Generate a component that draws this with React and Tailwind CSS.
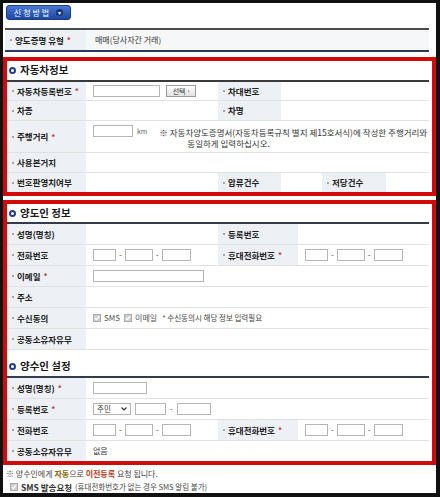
import React from "react";

// small gray dot in front of every label
const Dot = () => <span className="mr-[3px] inline-block h-[2px] w-[2px] shrink-0 bg-[#a5a5a5]" />;

function Label({ children, req }) {
  return (
    <div className="flex items-center bg-[#edf1f6] pl-[5px] text-[8.5px] font-bold leading-none text-[#222] whitespace-nowrap">
      <Dot />
      <span>{children}</span>
      {req && <span className="ml-[3px] text-[8px] text-[#c23a2b]">*</span>}
    </div>
  );
}

function Cell({ children, className = "" }) {
  return (
    <div className={`flex items-center pl-[7px] text-[8px] leading-none text-[#333] whitespace-nowrap ${className}`}>
      {children}
    </div>
  );
}

function Input({ className = "" }) {
  return <span className={`inline-block h-[12px] shrink-0 border border-[#b5b5b5] bg-white ${className}`} />;
}

function Phone() {
  return (
    <div className="flex items-center gap-[3px] text-[8px] text-[#444]">
      <Input className="w-[23px]" />
      <span>-</span>
      <Input className="w-[28px]" />
      <span>-</span>
      <Input className="w-[29px]" />
    </div>
  );
}

function Check() {
  return (
    <svg width="8" height="8" viewBox="0 0 8 8" className="shrink-0">
      <rect x="0.5" y="0.5" width="7" height="7" fill="#cfcfcf" stroke="#ababab" />
      <path d="M1.8 4.1 L3.3 5.6 L6.2 2.3" fill="none" stroke="#fff" strokeWidth="1.3" />
    </svg>
  );
}

function Title({ children, className = "" }) {
  return (
    <div className={`flex items-center pl-[2px] ${className}`}>
      <span className="h-[7px] w-[7px] rounded-full border-2 border-[#1f3f8f]" />
      <span className="ml-[4px] text-[10.5px] font-bold leading-none text-[#1a1a1a]">{children}</span>
    </div>
  );
}

const row = "grid border-b border-[#e1e1e1]";

export default function App() {
  return (
    <div className="h-[497px] w-[440px] overflow-hidden border-t-[3px] border-l-[3px] border-r-[4px] border-b-[4px] border-[#111] bg-white font-['Noto_Sans_CJK_KR','Noto_Sans',sans-serif]">
      {/* 신청방법 button */}
      <div className="ml-[3px] mt-[2px] flex h-[15px] w-[65px] items-center justify-center gap-[5px] rounded-[3px] border border-[#1b3b85] bg-gradient-to-b from-[#4a78d4] to-[#1d47a2] text-[8px] leading-none text-white">
        <span className="tracking-[2px]">신청방법</span>
        <span className="flex h-[7px] w-[7px] items-center justify-center rounded-full bg-[#17357a] text-[6px]">▾</span>
      </div>

      {/* 양도증명 유형 */}
      <div className="ml-[2px] mt-[8px] grid h-[24px] w-[424px] grid-cols-[81px_1fr] border-t-2 border-b-2 border-t-[#4a4a4a] border-b-[#2c3a5a]">
        <Label req>양도증명 유형</Label>
        <Cell className="bg-[#f6f7f8] pl-[9px]">매매(당사자간 거래)</Cell>
      </div>

      {/* 자동차정보 */}
      <div className="mt-[5px] border-4 border-[#d10b0b]">
        <Title className="h-[19px]">자동차정보</Title>
        <div className="mr-[3px] border-t-2 border-[#3a3a3a]">
          <div className={`${row} h-[19px] grid-cols-[79px_132px_63px_1fr]`}>
            <Label req>자동차등록번호</Label>
            <Cell>
              <Input className="w-[67px]" />
              <span className="ml-[6px] flex h-[12px] w-[30px] items-center justify-center gap-[2px] border border-[#9a9a9a] bg-gradient-to-b from-white to-[#e2e2e2] text-[7px] text-[#333]">
                선택<span className="text-[6px]">›</span>
              </span>
            </Cell>
            <Label>차대번호</Label>
            <Cell />
          </div>
          <div className={`${row} h-[20px] grid-cols-[79px_132px_63px_1fr]`}>
            <Label>차종</Label>
            <Cell />
            <Label>차명</Label>
            <Cell />
          </div>
          <div className={`${row} h-[32px] grid-cols-[79px_1fr]`}>
            <Label req>주행거리</Label>
            <Cell className="items-start pt-[4px]">
              <Input className="w-[40px]" />
              <span className="ml-[4px] mt-[3px] text-[7px] text-[#666]">km</span>
              <div className="ml-[12px] mt-[2px] text-[8.5px] leading-[11px] text-[#333]">
                <div>※ 자동차양도증명서(자동차등록규칙 별지 제15호서식)에 작성한 주행거리와</div>
                <div className="ml-[28px]">동일하게 입력하십시오.</div>
              </div>
            </Cell>
          </div>
          <div className={`${row} h-[20px] grid-cols-[79px_1fr]`}>
            <Label>사용본거지</Label>
            <Cell />
          </div>
          <div className="grid h-[19px] grid-cols-[79px_132px_63px_41px_64px_1fr]">
            <Label>번호판영치여부</Label>
            <Cell />
            <Label>압류건수</Label>
            <Cell />
            <Label>저당건수</Label>
            <Cell />
          </div>
        </div>
      </div>

      {/* 양도인 정보 / 양수인 설정 */}
      <div className="mt-[4px] border-4 border-[#d10b0b]">
        <Title className="h-[18px]">양도인 정보</Title>
        <div className="mr-[3px] border-t-2 border-[#333a4a]">
          <div className={`${row} h-[21px] grid-cols-[79px_132px_80px_1fr]`}>
            <Label>성명(명칭)</Label>
            <Cell />
            <Label>등록번호</Label>
            <Cell />
          </div>
          <div className={`${row} h-[21px] grid-cols-[79px_132px_80px_1fr]`}>
            <Label>전화번호</Label>
            <Cell><Phone /></Cell>
            <Label req>휴대전화번호</Label>
            <Cell><Phone /></Cell>
          </div>
          <div className={`${row} h-[21px] grid-cols-[79px_1fr]`}>
            <Label req>이메일</Label>
            <Cell><Input className="w-[111px]" /></Cell>
          </div>
          <div className={`${row} h-[21px] grid-cols-[79px_1fr]`}>
            <Label>주소</Label>
            <Cell />
          </div>
          <div className={`${row} h-[21px] grid-cols-[79px_1fr]`}>
            <Label>수신동의</Label>
            <Cell className="gap-[3px] text-[#555]">
              <Check />
              <span>SMS</span>
              <span className="ml-[1px]"><Check /></span>
              <span>이메일</span>
              <span className="ml-[2px] text-[7.5px] text-[#444]">* 수신동의시 해당 정보 입력필요</span>
            </Cell>
          </div>
          <div className={`${row} h-[21px] grid-cols-[79px_1fr]`}>
            <Label>공동소유자유무</Label>
            <Cell />
          </div>
        </div>

        <Title className="h-[26px] pt-[7px]">양수인 설정</Title>
        <div className="mr-[3px] border-t-2 border-[#333a4a]">
          <div className={`${row} h-[21px] grid-cols-[79px_1fr]`}>
            <Label req>성명(명칭)</Label>
            <Cell><Input className="w-[54px]" /></Cell>
          </div>
          <div className={`${row} h-[21px] grid-cols-[79px_1fr]`}>
            <Label req>등록번호</Label>
            <Cell className="gap-[4px] text-[#444]">
              <span className="flex h-[12px] w-[38px] items-center justify-between border border-[#b5b5b5] bg-white px-[3px] text-[7.5px] text-[#333]">
                주민
                <svg width="6" height="4" viewBox="0 0 6 4">
                  <path d="M0.5 0.5 L3 3 L5.5 0.5" fill="none" stroke="#333" strokeWidth="1.2" />
                </svg>
              </span>
              <Input className="w-[31px]" />
              <span>-</span>
              <Input className="w-[34px]" />
            </Cell>
          </div>
          <div className={`${row} h-[21px] grid-cols-[79px_132px_80px_1fr]`}>
            <Label>전화번호</Label>
            <Cell><Phone /></Cell>
            <Label req>휴대전화번호</Label>
            <Cell><Phone /></Cell>
          </div>
          <div className="grid h-[20px] grid-cols-[79px_1fr]">
            <Label>공동소유자유무</Label>
            <Cell>없음</Cell>
          </div>
        </div>
      </div>

      {/* notes */}
      <div className="pl-[3px] pt-[2px] text-[8px] leading-none text-[#444]">
        <div className="flex h-[13px] items-center whitespace-nowrap">
          ※ 양수인에게&nbsp;<b className="text-[#876a08]">자동</b>으로&nbsp;<b className="text-[#b23c17]">이전등록</b>&nbsp;요청 됩니다.
        </div>
        <div className="flex h-[14px] items-center gap-[3px] whitespace-nowrap pl-[4px]">
          <Check />
          <b className="text-[8.5px] text-[#333]">SMS 발송요청</b>
          <span className="text-[7.5px] text-[#444]">(휴대전화번호가 없는 경우 SMS 알림 불가)</span>
        </div>
      </div>
    </div>
  );
}
